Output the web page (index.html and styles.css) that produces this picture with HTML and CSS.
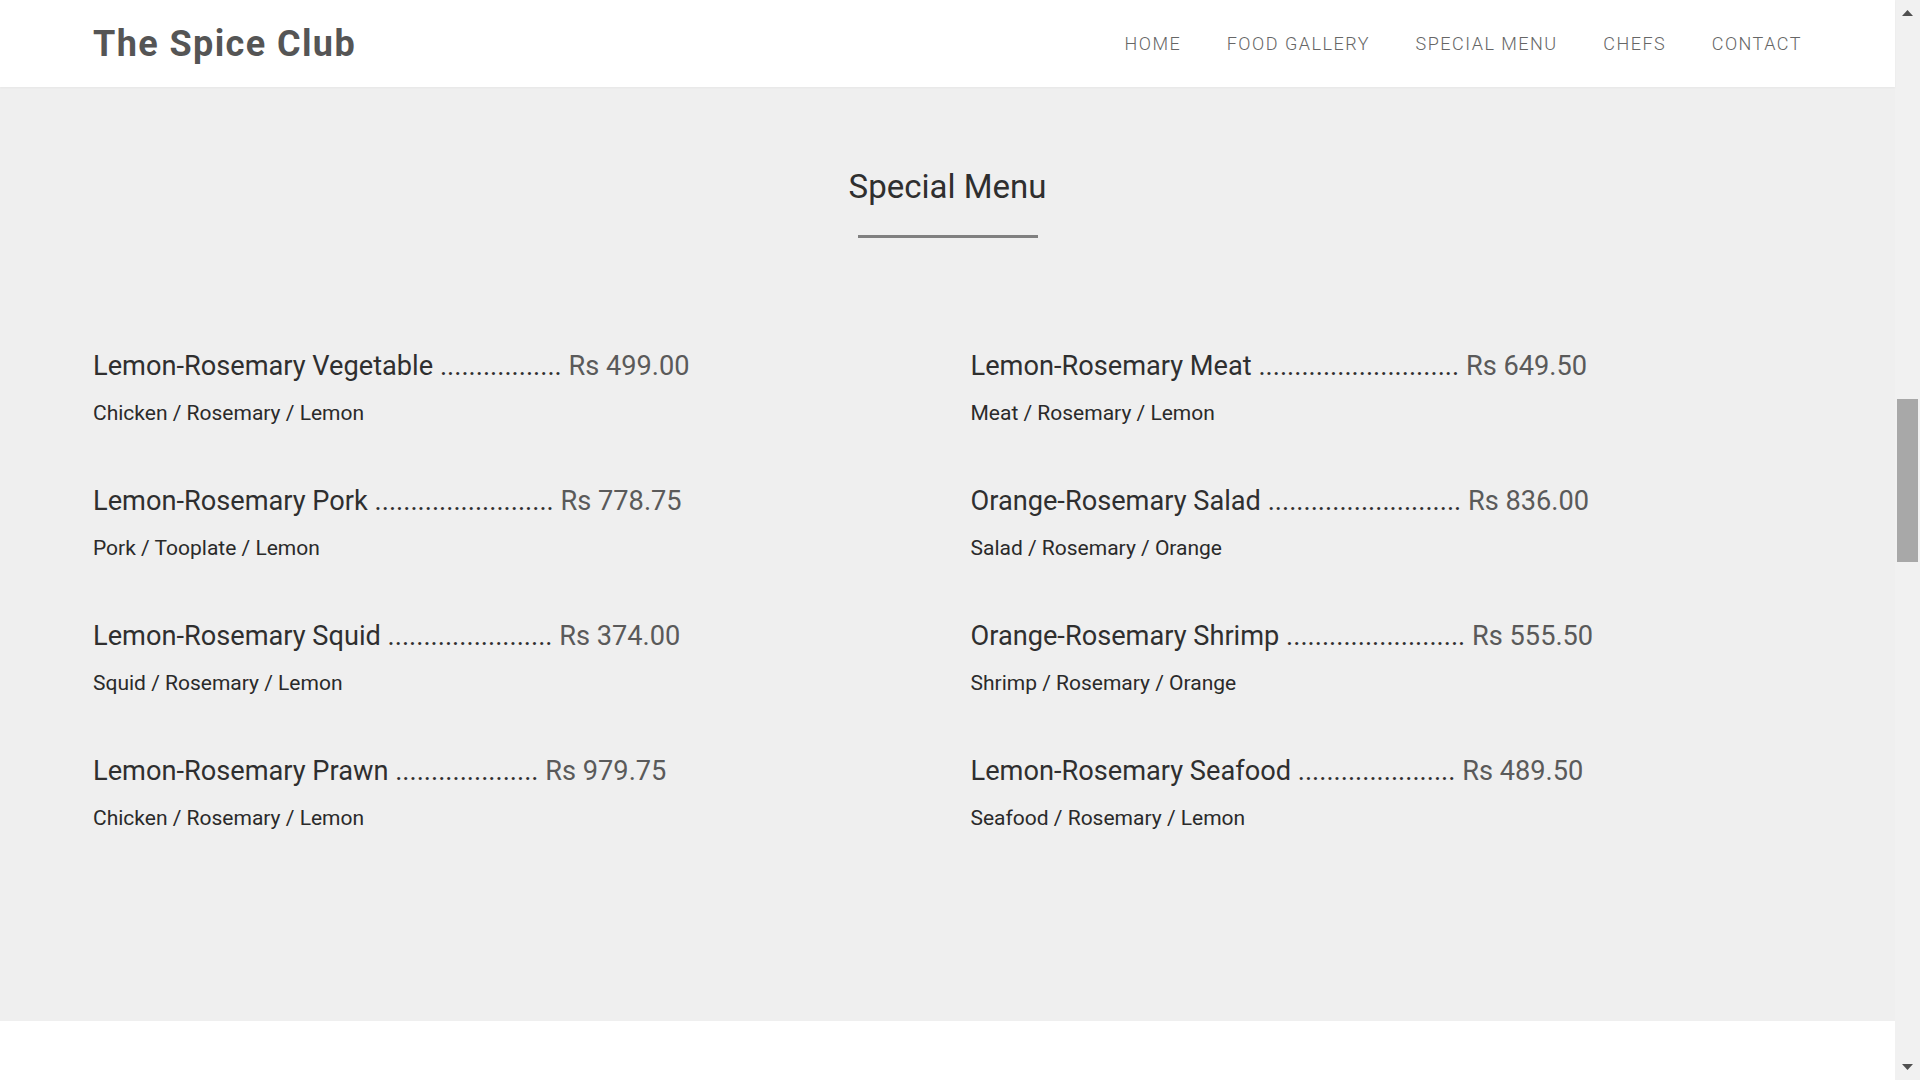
FILE: index.html
```html
<!DOCTYPE html>
<html lang="en">
<head>
<meta charset="utf-8">
<title>The Spice Club</title>
<link rel="stylesheet" href="styles.css">
</head>
<body>
<div class="page">
  <header class="site-header">
    <div class="container header-inner">
      <a class="logo" href="#">The Spice Club</a>
      <nav class="nav">
        <a href="#">HOME</a>
        <a href="#">FOOD GALLERY</a>
        <a href="#">SPECIAL MENU</a>
        <a href="#">CHEFS</a>
        <a href="#">CONTACT</a>
      </nav>
    </div>
  </header>

  <section class="menu-section">
    <div class="container">
      <h2 class="section-title">Special Menu</h2>
      <div class="title-rule"></div>
      <div class="menu-grid">
        <div class="menu-item">
          <h4 class="item-name">Lemon-Rosemary Vegetable ................. <span class="price">Rs 499.00</span></h4>
          <p class="item-desc">Chicken / Rosemary / Lemon</p>
        </div>
        <div class="menu-item">
          <h4 class="item-name">Lemon-Rosemary Meat ............................ <span class="price">Rs 649.50</span></h4>
          <p class="item-desc">Meat / Rosemary / Lemon</p>
        </div>
        <div class="menu-item">
          <h4 class="item-name">Lemon-Rosemary Pork ......................... <span class="price">Rs 778.75</span></h4>
          <p class="item-desc">Pork / Tooplate / Lemon</p>
        </div>
        <div class="menu-item">
          <h4 class="item-name">Orange-Rosemary Salad ........................... <span class="price">Rs 836.00</span></h4>
          <p class="item-desc">Salad / Rosemary / Orange</p>
        </div>
        <div class="menu-item">
          <h4 class="item-name">Lemon-Rosemary Squid ....................... <span class="price">Rs 374.00</span></h4>
          <p class="item-desc">Squid / Rosemary / Lemon</p>
        </div>
        <div class="menu-item">
          <h4 class="item-name">Orange-Rosemary Shrimp ......................... <span class="price">Rs 555.50</span></h4>
          <p class="item-desc">Shrimp / Rosemary / Orange</p>
        </div>
        <div class="menu-item">
          <h4 class="item-name">Lemon-Rosemary Prawn .................... <span class="price">Rs 979.75</span></h4>
          <p class="item-desc">Chicken / Rosemary / Lemon</p>
        </div>
        <div class="menu-item">
          <h4 class="item-name">Lemon-Rosemary Seafood ...................... <span class="price">Rs 489.50</span></h4>
          <p class="item-desc">Seafood / Rosemary / Lemon</p>
        </div>
      </div>
    </div>
  </section>

  <section class="next-section"></section>
</div>

<div class="scrollbar" aria-hidden="true">
  <div class="sb-arrow"><svg width="11" height="6" viewBox="0 0 11 6"><path d="M0 6 L5.5 0 L11 6 Z" fill="#505050"/></svg></div>
  <div class="sb-track"><div class="sb-thumb"></div></div>
  <div class="sb-arrow"><svg width="11" height="6" viewBox="0 0 11 6"><path d="M0 0 L11 0 L5.5 6 Z" fill="#505050"/></svg></div>
</div>
</body>
</html>
```

FILE: styles.css
```css
* { box-sizing: border-box; }

html, body {
  margin: 0;
  padding: 0;
  height: 100%;
}

body {
  display: flex;
  overflow: hidden;
  font-family: Roboto, "Liberation Sans", Arial, sans-serif;
  background: #ffffff;
}

.page {
  flex: 1;
  min-width: 0;
  display: flex;
  flex-direction: column;
}

.container {
  padding: 0 93px;
}

/* Header */
.site-header {
  height: 87px;
  background: #ffffff;
  box-shadow: 0 1px 2px rgba(0, 0, 0, 0.04);
  position: relative;
  z-index: 2;
}

.header-inner {
  height: 100%;
  display: flex;
  align-items: center;
  justify-content: space-between;
}

.logo {
  font-size: 36px;
  font-weight: 700;
  letter-spacing: 1.4px;
  color: #555555;
  text-decoration: none;
  line-height: 1;
}

.nav {
  display: flex;
  gap: 45.5px;
}

.nav a {
  font-size: 18px;
  font-weight: 300;
  letter-spacing: 1.5px;
  color: #666666;
  text-decoration: none;
  line-height: 1;
}

/* Special menu section */
.menu-section {
  background: #efefef;
  padding: 80px 0 188px;
}

.section-title {
  margin: 0;
  text-align: center;
  font-size: 33px;
  font-weight: 400;
  line-height: 40px;
  color: #2f2f2f;
}

.title-rule {
  width: 180px;
  height: 3px;
  background: #808080;
  margin: 28px auto 0;
}

.menu-grid {
  margin-top: 110px;
  display: grid;
  grid-template-columns: 1fr 1fr;
  column-gap: 46px;
  row-gap: 55px;
}

.item-name {
  margin: 0;
  font-size: 27.2px;
  font-weight: 400;
  line-height: 36px;
  color: #2f2f2f;
  white-space: nowrap;
}

.price {
  color: #5a5a5a;
}

.item-desc {
  margin: 14px 0 0;
  font-size: 21px;
  font-weight: 400;
  line-height: 30px;
  color: #2a2a2a;
}

.next-section {
  flex: 1;
  background: #ffffff;
}

/* Fake scrollbar column */
.scrollbar {
  width: 25px;
  flex: 0 0 25px;
  background: #f1f1f1;
  display: flex;
  flex-direction: column;
}

.sb-arrow {
  height: 26px;
  display: flex;
  align-items: center;
  justify-content: center;
}

.sb-track {
  flex: 1;
  padding: 0 2px;
}

.sb-thumb {
  margin-top: 373px;
  height: 163px;
  background: #a8a8a8;
}
```
